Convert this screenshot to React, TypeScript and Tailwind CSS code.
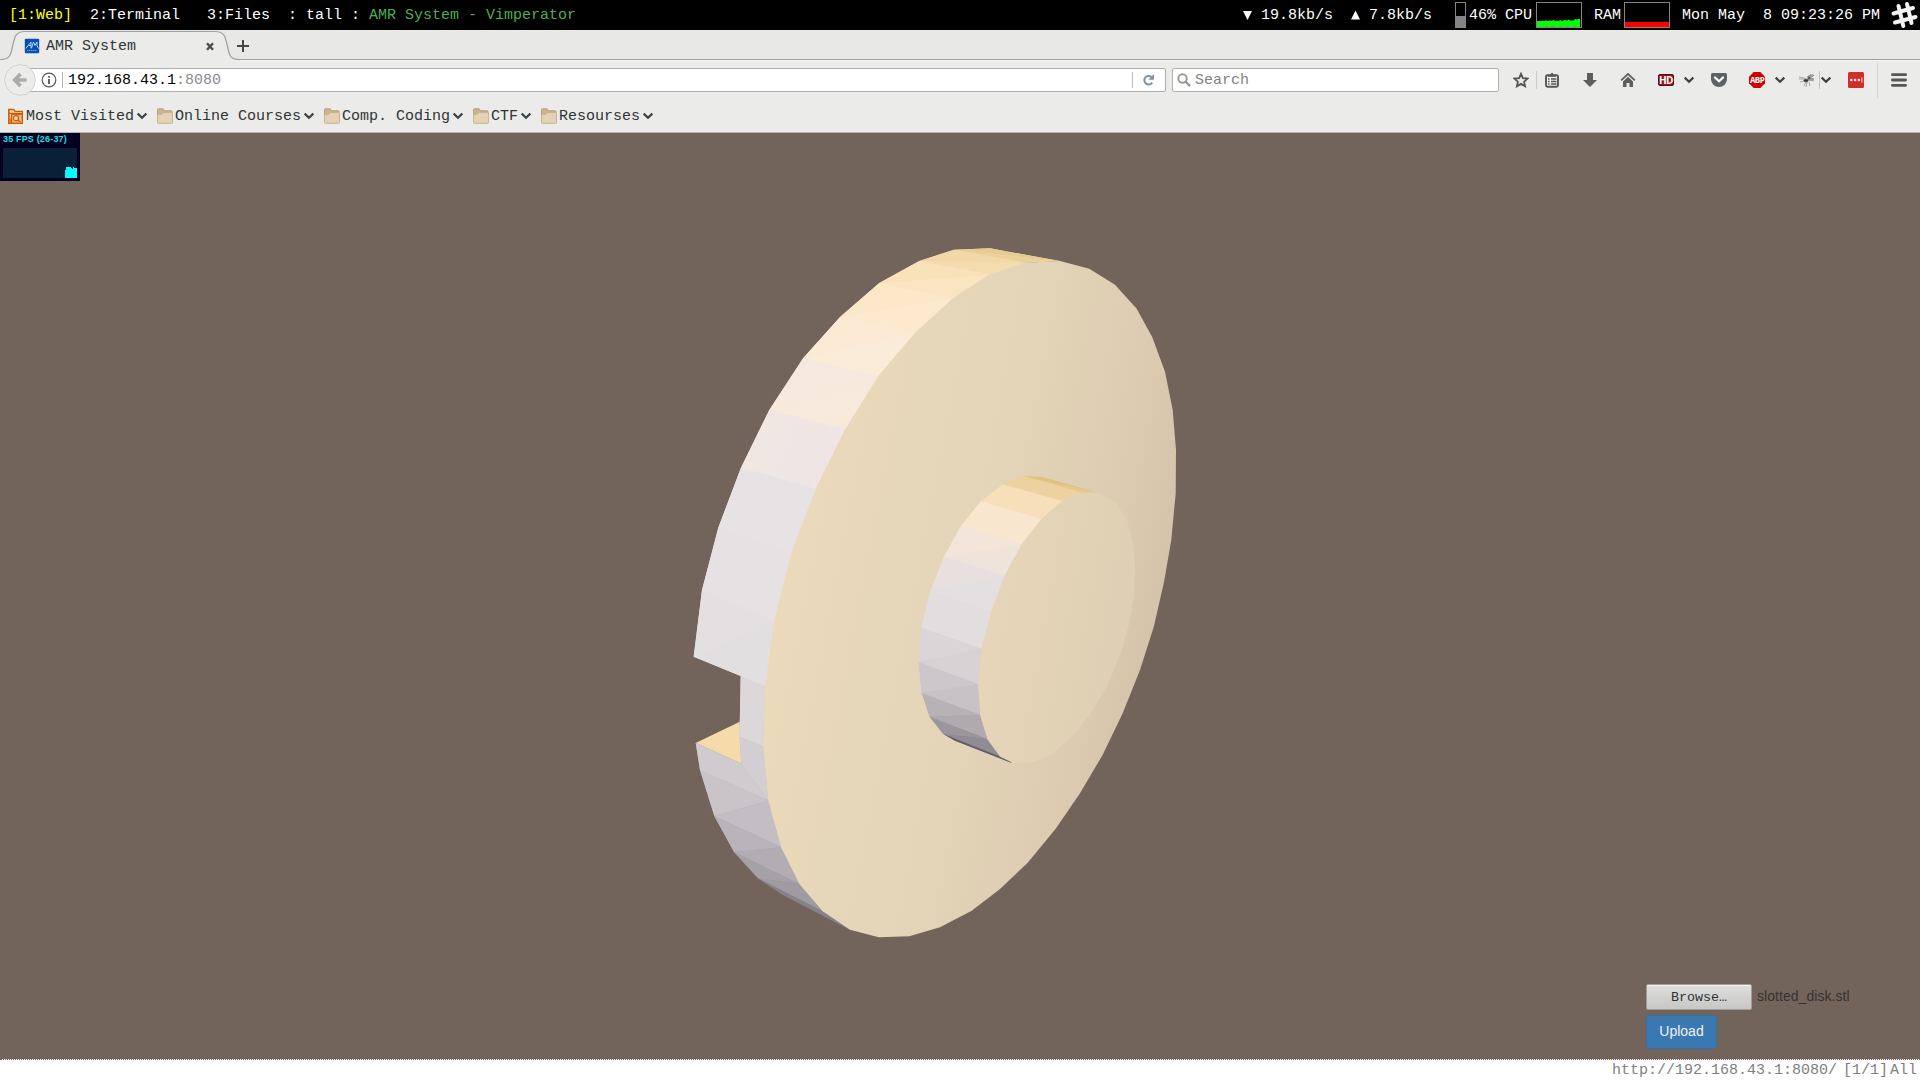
import React from "react";

type Facet = [string, string];

const RIM_UPPER_BASE =
  "990,248.3 1060,261 1025,262.7 990,290 915,345 845,440 792,565 770,690 740.7,676 693.7,656.7 702,590 718.3,527.7 741,467.7 769.3,410 803.3,358 840.3,316.7 879.3,283 919.3,261 954,249.7";

const RIM_LOWER_BASE =
  "740.7,676 770,690 768,746 773,800 790,850 810,880 850,929.7 783.3,895 758,878.3 734,852 714.3,816 700,770 695.7,743 741.3,763.7 739.5,736.7";

const HUB_BASE =
  "1041.7,477 1098.3,492.7 1060,510 1010,580 984,684 990,740 1012,763 955,740.7 943.3,734 929.7,716.7 921.7,693 918.7,662.3 921.3,627.7 930.3,591 944,556.7 961,526 981,501 1002.7,484.3 1024,476.3";

const RIM: Facet[] = [
  ["990,248.3 1060,261 954,249.7", "#e8cb92"],
  ["954,249.7 1060,261 1025,262.7", "#ecd09a"],
  ["954,249.7 1025,262.7 919.3,261", "#f2d8a8"],
  ["919.3,261 1025,262.7 990,274.3", "#f4dcae"],
  ["919.3,261 990,274.3 879.3,283", "#f9e1ba"],
  ["879.3,283 990,274.3 953.3,298", "#fbe4c1"],
  ["879.3,283 953.3,298 840.3,316.7", "#fce7c9"],
  ["840.3,316.7 953.3,298 915,332.7", "#fde9cd"],
  ["840.3,316.7 915,332.7 803.3,358", "#fcead5"],
  ["803.3,358 915,332.7 878.3,376", "#fbebd9"],
  ["803.3,358 878.3,376 845.3,429 769.3,410", "url(#rimWarm)"],
  ["769.3,410 845.3,429 815.7,488.7 741,467.7", "url(#rimRose)"],
  ["741,467.7 815.7,488.7 791.7,551.7 718.3,527.7", "#e7e3e4"],
  ["718.3,527.7 791.7,551.7 774,621 702,590", "#e6e2e4"],
  ["702,590 774,621 693.7,656.7", "#e4e0e2"],
  ["774,621 765,685.7 740.7,676 693.7,656.7", "#e2dfe1"],
  ["740.7,676 765,685.7 763,746 739.5,736.7", "#dcd8da"],
  ["739.5,736.7 763,746 768.3,800.7 741.3,763.7", "#d2ced1"],
  ["741.3,763.7 768.3,800.7 700,770 695.7,743", "#cfcbce"],
  ["700,770 768.3,800.7 714.3,816", "#c8c4c8"],
  ["714.3,816 768.3,800.7 781,847.3", "#c3bec3"],
  ["714.3,816 781,847.3 734,852", "#b9b4b9"],
  ["734,852 781,847.3 799.3,884", "#b2adb2"],
  ["734,852 799.3,884 758,878.3", "#a6a1a6"],
  ["758,878.3 799.3,884 822.7,911.3", "#a09ba0"],
  ["758,878.3 822.7,911.3 850,929.7 783.3,895", "#87828a"],
];

const HUB_SIDE: Facet[] = [
  ["1041.7,477 1098.3,492.7 1082.7,492.7 1024,476.3", "#dfc07c"],
  ["1024,476.3 1098.3,492.7 1082.7,492.7 1071.7,495.7", "#e6c88c"],
  ["1024,476.3 1082.7,492.7 1062.3,501 1002.7,484.3", "#edd29f"],
  ["1002.7,484.3 1062.3,501 1041.3,519 981,501", "#f7dfba"],
  ["981,501 1041.3,519 1021.7,544.3 961,526", "#f8e6cf"],
  ["961,526 1021.7,544.3 944,556.7", "#f3e5d9"],
  ["944,556.7 1021.7,544.3 1004.3,576", "#efe4dc"],
  ["944,556.7 1004.3,576 930.3,591", "#e8dfde"],
  ["930.3,591 1004.3,576 991,611.7", "#e4dfe0"],
  ["930.3,591 991,611.7 981.7,648.7 921.3,627.7", "#e2dddf"],
  ["921.3,627.7 981.7,648.7 918.7,662.3", "#dad6d8"],
  ["918.7,662.3 981.7,648.7 978,684", "#d7d3d5"],
  ["918.7,662.3 978,684 921.7,693", "#cbc7ca"],
  ["921.7,693 978,684 980,715", "#c6c2c6"],
  ["921.7,693 980,715 929.7,716.7", "#b7b2b6"],
  ["929.7,716.7 980,715 987.3,739.3", "#afaaae"],
  ["929.7,716.7 987.3,739.3 943.3,734", "#9b969b"],
  ["943.3,734 987.3,739.3 1000,756.7", "#918c93"],
  ["943.3,734 1000,756.7 1012,763 955,740.7", "#625d69"],
];

const FACE =
  "990,274.3 1025,262.7 1060,261 1089.3,268.7 1115,284.7 1136.7,308.7 1152.3,337.3 1165,371.7 1172.7,410 1176,450 1175.7,493.3 1171.3,540 1164,582 1154,626 1140,670 1122.7,713.3 1102.7,754.7 1080,793.3 1055.7,828.7 1027.7,862.7 1000,889 971.7,910.7 940,927.3 909.3,936.3 878.7,937.3 850,929.7 822.7,911.3 799.3,884 781,847.3 768.3,800.7 763,746 765,685.7 774,621 791.7,551.7 815.7,488.7 845.3,429 878.3,376 915,332.7 953.3,298";

const HUB_FACE =
  "1062.3,501 1071.7,495.7 1082.7,492.7 1098.3,492.7 1116,502.7 1126.7,519.3 1132.7,541.7 1135.3,568.3 1134,595 1129.3,623.3 1120.7,653.3 1106.7,686.7 1090,714 1071.7,736.7 1051.7,754 1035,762 1015,763.7 1000,756.7 987.3,739.3 980,715 978,684 981.7,648.7 991,611.7 1004.3,576 1021.7,544.3 1041.3,519";

function Facets({ items }: { items: Facet[] }) {
  return (
    <>
      {items.map(([points, fill]) => (
        <polygon key={points} points={points} fill={fill} />
      ))}
    </>
  );
}

function Model() {
  return (
    <svg className="block h-[926px] w-[1920px]" viewBox="0 133 1920 926">
      <defs>
        <linearGradient id="face" gradientUnits="userSpaceOnUse" x1="770" y1="560" x2="1180" y2="640">
          <stop offset="0" stopColor="#ebdabb" />
          <stop offset="0.5" stopColor="#e4d4b8" />
          <stop offset="0.8" stopColor="#dccbb0" />
          <stop offset="1" stopColor="#d2c0a6" />
        </linearGradient>
        <linearGradient id="hub" gradientUnits="userSpaceOnUse" x1="975" y1="610" x2="1140" y2="640">
          <stop offset="0" stopColor="#e7d6b9" />
          <stop offset="1" stopColor="#deceb3" />
        </linearGradient>
        <linearGradient id="rimWarm" gradientUnits="userSpaceOnUse" x1="800" y1="360" x2="815" y2="420">
          <stop offset="0" stopColor="#f5e8df" />
          <stop offset="1" stopColor="#f8eadb" />
        </linearGradient>
        <linearGradient id="rimRose" gradientUnits="userSpaceOnUse" x1="750" y1="430" x2="830" y2="460">
          <stop offset="0" stopColor="#f1e7e2" />
          <stop offset="1" stopColor="#eee5e4" />
        </linearGradient>
        <linearGradient id="rimBase" gradientUnits="userSpaceOnUse" x1="0" y1="250" x2="0" y2="480">
          <stop offset="0" stopColor="#f0d6a4" />
          <stop offset="0.4" stopColor="#fcead2" />
          <stop offset="1" stopColor="#e7e3e4" />
        </linearGradient>
        <linearGradient id="rimShade" gradientUnits="userSpaceOnUse" x1="0" y1="680" x2="0" y2="920">
          <stop offset="0" stopColor="#dcd8da" />
          <stop offset="1" stopColor="#87828a" />
        </linearGradient>
        <linearGradient id="hubBase" gradientUnits="userSpaceOnUse" x1="0" y1="476" x2="0" y2="764">
          <stop offset="0" stopColor="#e2c484" />
          <stop offset="0.15" stopColor="#f6e2c6" />
          <stop offset="0.45" stopColor="#e3dedf" />
          <stop offset="0.75" stopColor="#c6c2c6" />
          <stop offset="1" stopColor="#625d69" />
        </linearGradient>
      </defs>
      <polygon points="695.7,743 739.8,721.7 741.3,763.7" fill="#f4dba9" />
      <polygon points={RIM_UPPER_BASE} fill="url(#rimBase)" />
      <polygon points={RIM_LOWER_BASE} fill="url(#rimShade)" />
      <Facets items={RIM} />
      <polygon points={FACE} fill="url(#face)" />
      <polygon points={HUB_BASE} fill="url(#hubBase)" />
      <Facets items={HUB_SIDE} />
      <polygon points={HUB_FACE} fill="url(#hub)" />
    </svg>
  );
}

function Chevron({ className = "" }: { className?: string }) {
  return (
    <svg className={`h-2 w-[10px] shrink-0 ${className}`} viewBox="0 0 10 8" fill="none" stroke="#3a4145" strokeWidth="2.1">
      <path d="M0.7 1.6 5 5.8 9.3 1.6" />
    </svg>
  );
}

function Folder({ search = false }: { search?: boolean }) {
  return search ? (
    <svg className="h-4 w-4 shrink-0" viewBox="0 0 16 16">
      <path d="M.7 1.500h5l1.200 1.800h7.400v2H.7z" fill="#f6dfc4" stroke="#ce5c00" strokeWidth="1.3" />
      <path d="M.7 1.500v13.800h13.600V6.500H4.600L3 13" fill="#e88a3c" stroke="#ce5c00" strokeWidth="1.3" />
      <rect x="3.5" y="6.3" width="10.8" height="9" fill="#f3b27a" stroke="#ce5c00" strokeWidth="1.2" />
      <circle cx="8" cy="10.2" r="2.5" fill="#f9dcc0" stroke="#ce5c00" strokeWidth="1.2" />
      <path d="m10 12 2.300 2.200" stroke="#ce5c00" strokeWidth="1.4" />
    </svg>
  ) : (
    <svg className="h-4 w-4 shrink-0" viewBox="0 0 16 16">
      <path d="M.5 13V1.500Q.5.8 1.200.8h5l1.200 2h6.900q.7 0 .7.8V13" fill="#c8b491" stroke="#b7a27e" />
      <path d="M1.200 15.300q-.7 0-.7-.7V7.200q0-.7.7-.7h3L6 4.600h8.800q.7 0 .7.7v9.300q0 .7-.7.7z" fill="#e5d1b3" stroke="#c9b391" />
    </svg>
  );
}

function TopBar() {
  return (
    <div className="flex h-[30px] items-start bg-black text-white">
      <div className="mt-[6px] ml-[9px] h-5 leading-5 whitespace-pre">
        <span className="text-[#ffff00]">[1:Web]</span>
        {"  2:Terminal   3:Files  : tall : "}
        <span className="text-[#4caf50]">AMR System - Vimperator</span>
      </div>
      <div className="mt-[6px] ml-auto flex h-5 leading-5 whitespace-pre">
        <svg className="mt-[4px] h-[10px] w-[9px]" viewBox="0 0 9 10" fill="#fff"><path d="M0 1h9L4.500 10z" /></svg>
        <span>{" 19.8kb/s  "}</span>
        <svg className="mt-[4px] h-[10px] w-[9px]" viewBox="0 0 9 10" fill="#fff"><path d="M0 9.500h9L4.500.5z" /></svg>
        <span>{" 7.8kb/s"}</span>
      </div>
      <div className="mt-[2px] ml-[23px] flex h-[26px] w-[11px] items-end border border-[#858585]">
        <div className="h-[11px] w-full bg-[#858585]" />
      </div>
      <div className="mt-[6px] ml-[3px] w-[67px] leading-5 whitespace-pre">46% CPU</div>
      <svg className="mt-[2px] h-[26px] w-[46px]" viewBox="0 0 46 26">
        <path d="M1 25V19h8l1-1 1 1 3-.5 1 .5 3-1 1 1h4l1-1 2 1 3-1 2 .5 2-1 1 1h4l1-1.500 2 .5 1-.5h2V25z" fill="#00ff00" />
        <rect x=".5" y=".5" width="45" height="25" fill="none" stroke="#858585" />
        <path d="M9 24.500h3m3 0h4m4 0h3m3 0h4m4 0h3" stroke="#55aa44" />
      </svg>
      <div className="mt-[6px] ml-[12px] w-[30px] leading-5">RAM</div>
      <div className="mt-[2px] flex h-[26px] w-[46px] items-end border border-[#858585]">
        <div className="h-[5px] w-full bg-[#ff0000]" />
      </div>
      <div className="mt-[6px] ml-[12px] leading-5 whitespace-pre">Mon May  8 09:23:26 PM</div>
      <svg className="mt-[1px] mr-[2px] ml-[11px] h-7 w-[27px]" viewBox="0 0 27 28" fill="none" stroke="#f2f2f2" strokeWidth="4" strokeLinecap="round">
        <path d="M7.500 5l4.800 20M16 3l4.500 19M2.500 12.500 22 7M4 21.500 24.500 16" />
      </svg>
    </div>
  );
}

function Tabs() {
  return (
    <div className="relative h-[31px] bg-[#e8e8e6]">
      <svg className="absolute inset-0 h-[31px] w-full" viewBox="0 0 1920 31">
        <path d="M0 29.500C9 29.500 10.500 26 12 19 14.500 8 14.500 1.500 25 1.500H215C225.500 1.500 225.500 8 228 19 229.500 26 231 29.500 239 29.500H1920V31H0z" fill="#ebebe9" />
        <path d="M0 29.500C9 29.500 10.500 26 12 19 14.500 8 14.500 1.500 25 1.500H215C225.500 1.500 225.500 8 228 19 229.500 26 231 29.500 239 29.500H1920" fill="none" stroke="#9ea0a2" strokeWidth="1.2" />
        <path d="M240 30.500H1920" stroke="#f6f6f5" />
      </svg>
      <div className="relative flex h-[30px] items-center text-[#2e3436]">
        <svg className="mt-[2px] ml-[24px] h-4 w-4" viewBox="0 0 16 16" fill="none">
          <rect x=".8" y=".8" width="14.4" height="14.400" rx="1" fill="#0750ae" />
          <path d="M1.800 10.500 7 4v6.500M4.500 7.500H7M7.500 10l2-6 1.500 3.500L13 4v3.500l1.500 3" stroke="#b4d4f8" strokeWidth="1" />
          <path d="M3 12.500h10" stroke="#6d9fdc" strokeDasharray="1.500 .5" />
        </svg>
        <span className="mt-[3px] ml-[6px] w-[159px] leading-5">AMR System</span>
        <svg className="mt-[2px] ml-[1px] h-[9px] w-2" viewBox="0 0 8 9" stroke="#474d50" strokeWidth="2.4"><path d="m1 1.300 6 6.400M7 1.300 1 7.700" /></svg>
        <svg className="mt-[2px] ml-[23px] h-3 w-3" viewBox="0 0 12 12" stroke="#42474a" strokeWidth="2"><path d="M6 0v12M0 6h12" /></svg>
      </div>
    </div>
  );
}

function NavBar() {
  return (
    <div className="flex h-[39px] items-center bg-[#ebebe9] pb-px">
      <svg className="relative z-10 ml-1 h-8 w-8 shrink-0" viewBox="0 0 32 32">
        <circle cx="16" cy="16" r="15.3" fill="#ececea" stroke="#d0d0ce" />
        <path d="M16.500 10 10.800 16l5.700 6M11 16h11.500" fill="none" stroke="#acacac" strokeWidth="3.7" />
      </svg>
      <div className="-ml-[12px] flex h-6 w-[1142px] shrink-0 items-center rounded-r-[2px] border border-[#b1b1af] bg-white pl-[16px]">
        <svg className="h-4 w-4" viewBox="0 0 16 16" fill="none" stroke="#555" strokeWidth="1.2">
          <circle cx="8" cy="8" r="6.8" />
          <path d="M8 7v5M8 4v1.800" strokeWidth="1.8" />
        </svg>
        <div className="ml-[5px] h-4 w-px bg-[#b5b5b5]" />
        <span className="mt-px ml-[5px] leading-5 text-black">192.168.43.1<span className="text-[#8b8b8b]">:8080</span></span>
        <div className="ml-auto h-4 w-px bg-[#bcbcbc]" />
        <svg className="mr-[9px] ml-[9px] h-[14px] w-[14px]" viewBox="0 0 14 14" fill="none" stroke="#84929e" strokeWidth="2">
          <path d="M10.200 9.600A4.300 4.300 0 1 1 9.500 4" /><path d="M12 1v5.800H6.300z" fill="#84929e" stroke="none" />
        </svg>
      </div>
      <div className="ml-[6px] flex h-6 w-[327px] shrink-0 items-center rounded-[2px] border border-[#b1b1af] bg-white pl-[4px] text-[#838383]">
        <svg className="h-[14px] w-[14px]" viewBox="0 0 14 14" fill="none" stroke="#999" strokeWidth="1.9">
          <circle cx="5.5" cy="5.5" r="4.2" /><path d="m8.500 8.500 4.600 4.600" strokeWidth="2.4" />
        </svg>
        <span className="mt-px ml-[4px] leading-5">Search</span>
      </div>
      <svg className="ml-[14px] h-4 w-4 shrink-0" viewBox="0 0 16 16" fill="none" stroke="#50555a" strokeWidth="1.8">
        <path d="m8 1.800 1.900 4.300 4.700.5-3.500 3.100 1 4.600L8 11.900l-4.100 2.400 1-4.600-3.500-3.100 4.700-.5z" />
      </svg>
      <div className="ml-[7px] h-[18px] w-px bg-[#ccccca]" />
      <svg className="ml-[7px] h-4 w-4 shrink-0" viewBox="0 0 16 16">
        <rect x="2" y="3.3" width="12" height="11.400" rx="1.5" fill="#f0f0ee" stroke="#565656" strokeWidth="1.9" />
        <path d="M4 4.800V2.700h2.500Q6.800.8 8 .8t1.500 1.900H12v2.100z" fill="#565656" />
        <path d="M4 7h1.500M4 9.500h1.500M4 12h1.500M7 7h5.500M7 9.500h5.500M7 12h5.500" stroke="#565656" strokeWidth="1.5" />
      </svg>
      <svg className="ml-[22px] h-4 w-4 shrink-0" viewBox="0 0 16 16" fill="#5e5e5e"><path d="M5 1h6v7h4l-7 7-7-7h4z" /></svg>
      <svg className="ml-[22px] h-4 w-4 shrink-0" viewBox="0 0 16 16" fill="#5e5e5e">
        <path d="m8 .7 7.500 7-1.200 1.300L8 3.200 1.700 9 .5 7.700z" /><path d="m8 4.700 5 4.700V15H9.500v-4h-3v4H3V9.400z" />
      </svg>
      <div className="ml-[22px] flex h-[12px] w-4 shrink-0 items-center justify-center rounded-[2px] border border-[#5d0b0e] bg-[#98141a] font-['Open_Sans',sans-serif] text-[10px] leading-none font-bold tracking-[-0.5px] text-white">HD</div>
      <Chevron className="ml-[10px]" />
      <svg className="ml-[17px] h-4 w-4 shrink-0" viewBox="0 0 16 16">
        <path d="M1.500 1h13Q16 1 16 2.500v4.800a8 7.700 0 0 1-16 0V2.500Q0 1 1.500 1z" fill="#5f6264" />
        <path d="m4 5.500 4 3.800 4-3.800" fill="none" stroke="#fff" strokeWidth="2.2" strokeLinecap="round" />
      </svg>
      <div className="relative ml-[22px] flex h-4 w-4 shrink-0 items-center justify-center">
        <svg className="absolute inset-0" viewBox="0 0 16 16" fill="#d00000"><path d="M4.700 0h6.600L16 4.700v6.600L11.300 16H4.700L0 11.300V4.700z" /></svg>
        <span className="relative font-['Open_Sans',sans-serif] text-[8px] leading-none font-bold tracking-[-0.6px] text-white">ABP</span>
      </div>
      <Chevron className="ml-[10px]" />
      <svg className="ml-[14px] h-4 w-4 shrink-0" viewBox="0 0 16 16" fill="none" stroke="#777" strokeWidth=".6">
        <path d="M0 5l5 1 3 2M0 7h5M1 10l5-1M5 14l2-4M7 15l1-5M11 14l-1-4M12 2l-2 3M15 9l-4-1" />
        <path d="M8 5q3-3 7-2-1 2-5 3M8 7q4-2 7 0-2 2-6 1" fill="#aaa" />
        <ellipse cx="7" cy="8.5" rx="2.3" ry="1.6" fill="#333" /><circle cx="10" cy="6" r="1.2" fill="#444" />
      </svg>
      <div className="ml-[4px] h-[18px] w-px bg-[#c4c4c2]" />
      <Chevron className="ml-[1px]" />
      <svg className="ml-[17px] h-4 w-4 shrink-0" viewBox="0 0 16 16">
        <rect width="16" height="16" rx="1.5" fill="#d32d27" /><g fill="#fff"><circle cx="3.3" cy="8" r="1.3" /><circle cx="7.100" cy="8" r="1.3" /><circle cx="10.900" cy="8" r="1.3" /><path d="M13.500 5.500h.9v5h-.9z" /></g>
      </svg>
      <div className="ml-[13px] h-[35px] w-px bg-[#d4d4d2]" />
      <svg className="ml-[13px] h-[14px] w-4 shrink-0" viewBox="0 0 16 14" stroke="#545658" strokeWidth="2.8" strokeLinecap="round"><path d="M1.400 1.700h13.200M1.400 7h13.200M1.400 12.300h13.200" /></svg>
    </div>
  );
}

const BOOKMARKS = ["Most Visited", "Online Courses", "Comp. Coding", "CTF", "Resourses"];

function Bookmarks() {
  return (
    <div className="flex h-[33px] items-start gap-[10px] border-b border-[#b5b3b0] bg-[#ebebe9] pt-[6px] pl-2 text-[#2e3436]">
      {BOOKMARKS.map((name, i) => (
        <div key={name} className="flex items-start">
          <div className="mt-[2px]"><Folder search={i === 0} /></div>
          <span className="mt-px ml-[2px] leading-5">{name}</span>
          <Chevron className="mt-[6px] ml-[3px]" />
        </div>
      ))}
    </div>
  );
}

export default function App() {
  return (
    <div className="flex h-[1080px] w-[1920px] flex-col overflow-hidden bg-[#72645b] font-['Liberation_Mono',monospace] text-[15px]">
      <TopBar />
      <Tabs />
      <NavBar />
      <Bookmarks />
      <main className="relative h-[926px] shrink-0 bg-[#72645b]">
        <Model />
        <div className="absolute top-0 left-0 flex h-12 w-20 flex-col bg-[#000022] px-[3px] pb-[3px]">
          <div className="h-[15px] font-['Liberation_Sans',sans-serif] text-[9px] leading-[12px] font-bold tracking-[0.17px] whitespace-nowrap text-[#1cdfe0]">35 FPS (26-37)</div>
          <svg className="h-[30px] w-[74px]" viewBox="0 0 74 30">
            <rect width="74" height="30" fill="#0a1f38" />
            <path d="M62 30V22h1v-3h5v1h1v1h1v-2h1v1h3v10z" fill="#00ffff" />
          </svg>
        </div>
        <div className="absolute top-[851px] left-[1646px] flex flex-col items-start gap-[5px] font-['Liberation_Sans',sans-serif] text-[14px]">
          <div className="flex h-[26px] items-center text-[#333]">
            <button className="h-[26px] w-[106px] rounded-[2px] border border-[#a09e9a] bg-linear-to-b from-[#dededc] to-[#c7c7c5] pt-px font-['Liberation_Mono',monospace] text-[13.33px] leading-5 text-[#2e3436] shadow-[inset_0_1px_0_#f4f4f3]">Browse…</button>
            <span className="mb-[2px] ml-[5px] leading-5 tracking-[0.05px]">slotted_disk.stl</span>
          </div>
          <button className="h-[34px] w-[71px] rounded-[4px] border border-[#3470a6] bg-[#3a78b2] pb-[2px] leading-5 text-[#f1f1f1]">Upload</button>
        </div>
      </main>
      <footer className="flex h-[21px] shrink-0 items-start justify-end border-t border-dotted border-[#72645b] bg-white pr-[3px] leading-[22px] text-[#808080]">
        <span>http://192.168.43.1:8080/</span>
        <span className="ml-[6px]">[1/1]</span>
        <span className="ml-[2px]">All</span>
      </footer>
    </div>
  );
}
